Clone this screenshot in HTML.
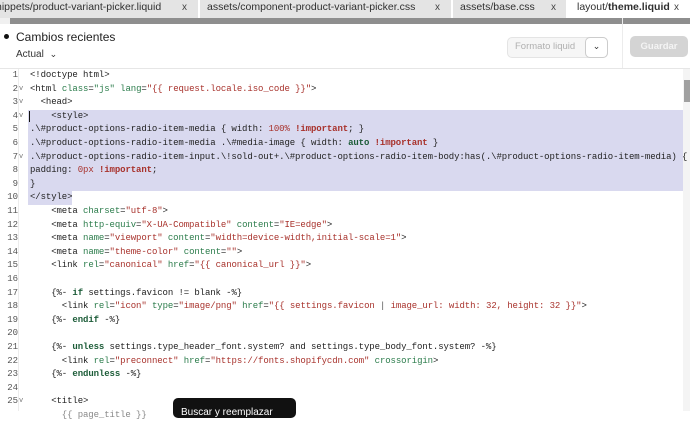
<!DOCTYPE html>
<html><head><style>
body{margin:0;width:690px;height:411px;overflow:hidden;background:#fff;font-family:"Liberation Sans",sans-serif;position:relative}
.tabs{position:absolute;top:0;left:0;width:690px;height:18px;background:#e4e4e4;font-size:10.5px;color:#303030}
.tab{position:absolute;top:0;height:18px;line-height:15px;white-space:nowrap}
.x{position:absolute;top:0;height:18px;line-height:15px;font-size:10px;color:#444}
.sep{position:absolute;top:0;width:2px;height:18px;background:#fff}
.bar{position:absolute;top:18px;left:10px;width:680px;height:6px;background:#8e8e8e}
.bar0{position:absolute;top:18px;left:0;width:10px;height:6px;background:#f0f0f0}
.hdr{position:absolute;top:24px;left:0;width:690px;height:44px;background:#fff;border-bottom:1px solid #e6e6e6}
.code{position:absolute;top:69px;left:0;width:683px;height:342px;font-family:"Liberation Mono",monospace;font-size:9px;letter-spacing:-0.1px;color:#222}
.ln{position:absolute;left:0;width:30px;height:13.6px;line-height:13.6px}
.n{position:absolute;left:0;width:18px;text-align:right;color:#555;letter-spacing:0}
.f{position:absolute;left:19px;font-size:7px;color:#777}
.t{position:absolute;left:30px;white-space:pre;height:13.6px;line-height:13.6px}
.a{color:#2b7c4b}.s{color:#a8322c}.k{color:#1c5c38;font-weight:bold}.i{color:#a8322c;font-weight:bold}
.sel{position:absolute;background:#d9d9ef}
</style></head><body>
<div class="tabs">
 <div class="tab" style="left:-4px">nippets/product-variant-picker.liquid</div><div class="x" style="left:182px">x</div>
 <div class="sep" style="left:198px"></div>
 <div class="tab" style="left:207px">assets/component-product-variant-picker.css</div><div class="x" style="left:435px">x</div>
 <div class="sep" style="left:451px"></div>
 <div class="tab" style="left:460px">assets/base.css</div><div class="x" style="left:551px">x</div>
 <div style="position:absolute;left:566px;top:0;width:124px;height:18px;background:#fff"></div>
 <div class="tab" style="left:577px">layout/<b>theme.liquid</b></div><div class="x" style="left:674px">x</div>
</div>
<div class="bar0"></div><div class="bar"></div>
<div class="hdr">
 <div style="position:absolute;left:4px;top:10px;width:5px;height:5px;border-radius:50%;background:#111"></div>
 <div style="position:absolute;left:16px;top:6px;font-size:12px;color:#222">Cambios recientes</div>
 <div style="position:absolute;left:16px;top:25px;font-size:10px;color:#333">Actual <span style="font-size:9px;margin-left:3px">&#8964;</span></div>
 <div style="position:absolute;left:507px;top:13px;width:99px;height:19px;border:1px solid #e4e4e4;border-radius:5px;background:#f6f6f6"></div>
 <div style="position:absolute;left:515px;top:17px;font-size:9.5px;color:#b0b0b0">Formato liquid</div>
 <div style="position:absolute;left:585px;top:13px;width:21px;height:19px;border:1px solid #ccc;border-radius:5px;background:#fff;font-size:9px;text-align:center;line-height:17px;color:#333">&#8964;</div>
 <div style="position:absolute;left:622px;top:-6px;width:1px;height:50px;background:#ececec"></div>
 <div style="position:absolute;left:630px;top:12px;width:58px;height:21px;border-radius:5px;background:#d4d4d4;color:#f4f4f4;font-size:9.5px;font-weight:bold;text-align:center;line-height:21px">Guardar</div>
</div>
<div style="position:absolute;left:683px;top:69px;width:7px;height:342px;background:#f4f4f4"></div>
<div style="position:absolute;left:684px;top:80px;width:6px;height:22px;background:#a0a0a0"></div>
<div style="position:absolute;left:18px;top:69px;width:1px;height:342px;background:#ececec"></div>
<div class="code">
 <div class="sel" style="left:28px;top:40.8px;width:655px;height:81.6px"></div>
 <div class="sel" style="left:28px;top:122.4px;width:44px;height:13.6px"></div>
 <div style="position:absolute;left:29px;top:42px;width:1px;height:11px;background:#111"></div>

 <div class="ln" style="top:0"><span class="n">1</span></div><div class="t" style="top:0">&lt;!doctype html&gt;</div>
 <div class="ln" style="top:13.6px"><span class="n">2</span><span class="f">v</span></div><div class="t" style="top:13.6px">&lt;html <span class="a">class</span>=<span class="a">"js"</span> <span class="a">lang</span>=<span class="s">"{{ request.locale.iso_code }}"</span>&gt;</div>
 <div class="ln" style="top:27.2px"><span class="n">3</span><span class="f">v</span></div><div class="t" style="top:27.2px">  &lt;head&gt;</div>
 <div class="ln" style="top:40.8px"><span class="n">4</span><span class="f">v</span></div><div class="t" style="top:40.8px">    &lt;style&gt;</div>
 <div class="ln" style="top:54.4px"><span class="n">5</span></div><div class="t" style="top:54.4px">.\#product-options-radio-item-media { width: <span class="s">100%</span> <span class="i">!important</span>; }</div>
 <div class="ln" style="top:68px"><span class="n">6</span></div><div class="t" style="top:68px">.\#product-options-radio-item-media .\#media-image { width: <span class="k">auto</span> <span class="i">!important</span> }</div>
 <div class="ln" style="top:81.6px"><span class="n">7</span><span class="f">v</span></div><div class="t" style="top:81.6px">.\#product-options-radio-item-input.\!sold-out+.\#product-options-radio-item-body:has(.\#product-options-radio-item-media) {</div>
 <div class="ln" style="top:95.2px"><span class="n">8</span></div><div class="t" style="top:95.2px">padding: <span class="s">0px</span> <span class="i">!important</span>;</div>
 <div class="ln" style="top:108.8px"><span class="n">9</span></div><div class="t" style="top:108.8px">}</div>
 <div class="ln" style="top:122.4px"><span class="n">10</span></div><div class="t" style="top:122.4px">&lt;/style&gt;</div>
 <div class="ln" style="top:136px"><span class="n">11</span></div><div class="t" style="top:136px">    &lt;meta <span class="a">charset</span>=<span class="s">"utf-8"</span>&gt;</div>
 <div class="ln" style="top:149.6px"><span class="n">12</span></div><div class="t" style="top:149.6px">    &lt;meta <span class="a">http-equiv</span>=<span class="s">"X-UA-Compatible"</span> <span class="a">content</span>=<span class="s">"IE=edge"</span>&gt;</div>
 <div class="ln" style="top:163.2px"><span class="n">13</span></div><div class="t" style="top:163.2px">    &lt;meta <span class="a">name</span>=<span class="s">"viewport"</span> <span class="a">content</span>=<span class="s">"width=device-width,initial-scale=1"</span>&gt;</div>
 <div class="ln" style="top:176.8px"><span class="n">14</span></div><div class="t" style="top:176.8px">    &lt;meta <span class="a">name</span>=<span class="s">"theme-color"</span> <span class="a">content</span>=<span class="s">""</span>&gt;</div>
 <div class="ln" style="top:190.4px"><span class="n">15</span></div><div class="t" style="top:190.4px">    &lt;link <span class="a">rel</span>=<span class="s">"canonical"</span> <span class="a">href</span>=<span class="s">"{{ canonical_url }}"</span>&gt;</div>
 <div class="ln" style="top:204px"><span class="n">16</span></div>
 <div class="ln" style="top:217.6px"><span class="n">17</span></div><div class="t" style="top:217.6px">    {%- <span class="k">if</span> settings.favicon != blank -%}</div>
 <div class="ln" style="top:231.2px"><span class="n">18</span></div><div class="t" style="top:231.2px">      &lt;link <span class="a">rel</span>=<span class="s">"icon"</span> <span class="a">type</span>=<span class="s">"image/png"</span> <span class="a">href</span>=<span class="s">"{{ settings.favicon <span style="color:#555">|</span> image_url: width: 32, height: 32 }}"</span>&gt;</div>
 <div class="ln" style="top:244.8px"><span class="n">19</span></div><div class="t" style="top:244.8px">    {%- <span class="k">endif</span> -%}</div>
 <div class="ln" style="top:258.4px"><span class="n">20</span></div>
 <div class="ln" style="top:272px"><span class="n">21</span></div><div class="t" style="top:272px">    {%- <span class="k">unless</span> settings.type_header_font.system? and settings.type_body_font.system? -%}</div>
 <div class="ln" style="top:285.6px"><span class="n">22</span></div><div class="t" style="top:285.6px">      &lt;link <span class="a">rel</span>=<span class="s">"preconnect"</span> <span class="a">href</span>=<span class="s">"https://fonts.shopifycdn.com"</span> <span class="a">crossorigin</span>&gt;</div>
 <div class="ln" style="top:299.2px"><span class="n">23</span></div><div class="t" style="top:299.2px">    {%- <span class="k">endunless</span> -%}</div>
 <div class="ln" style="top:312.8px"><span class="n">24</span></div>
 <div class="ln" style="top:326.4px"><span class="n">25</span><span class="f">v</span></div><div class="t" style="top:326.4px">    &lt;title&gt;</div>
 <div class="t" style="top:340px;color:#888">      {{ page_title }}</div>
</div>
<div style="position:absolute;left:173px;top:398px;width:123px;height:20px;border-radius:5px;background:#111"></div>
<div style="position:absolute;left:181px;top:407px;font-size:10px;color:#fff;white-space:nowrap">Buscar y reemplazar</div>
</body></html>
